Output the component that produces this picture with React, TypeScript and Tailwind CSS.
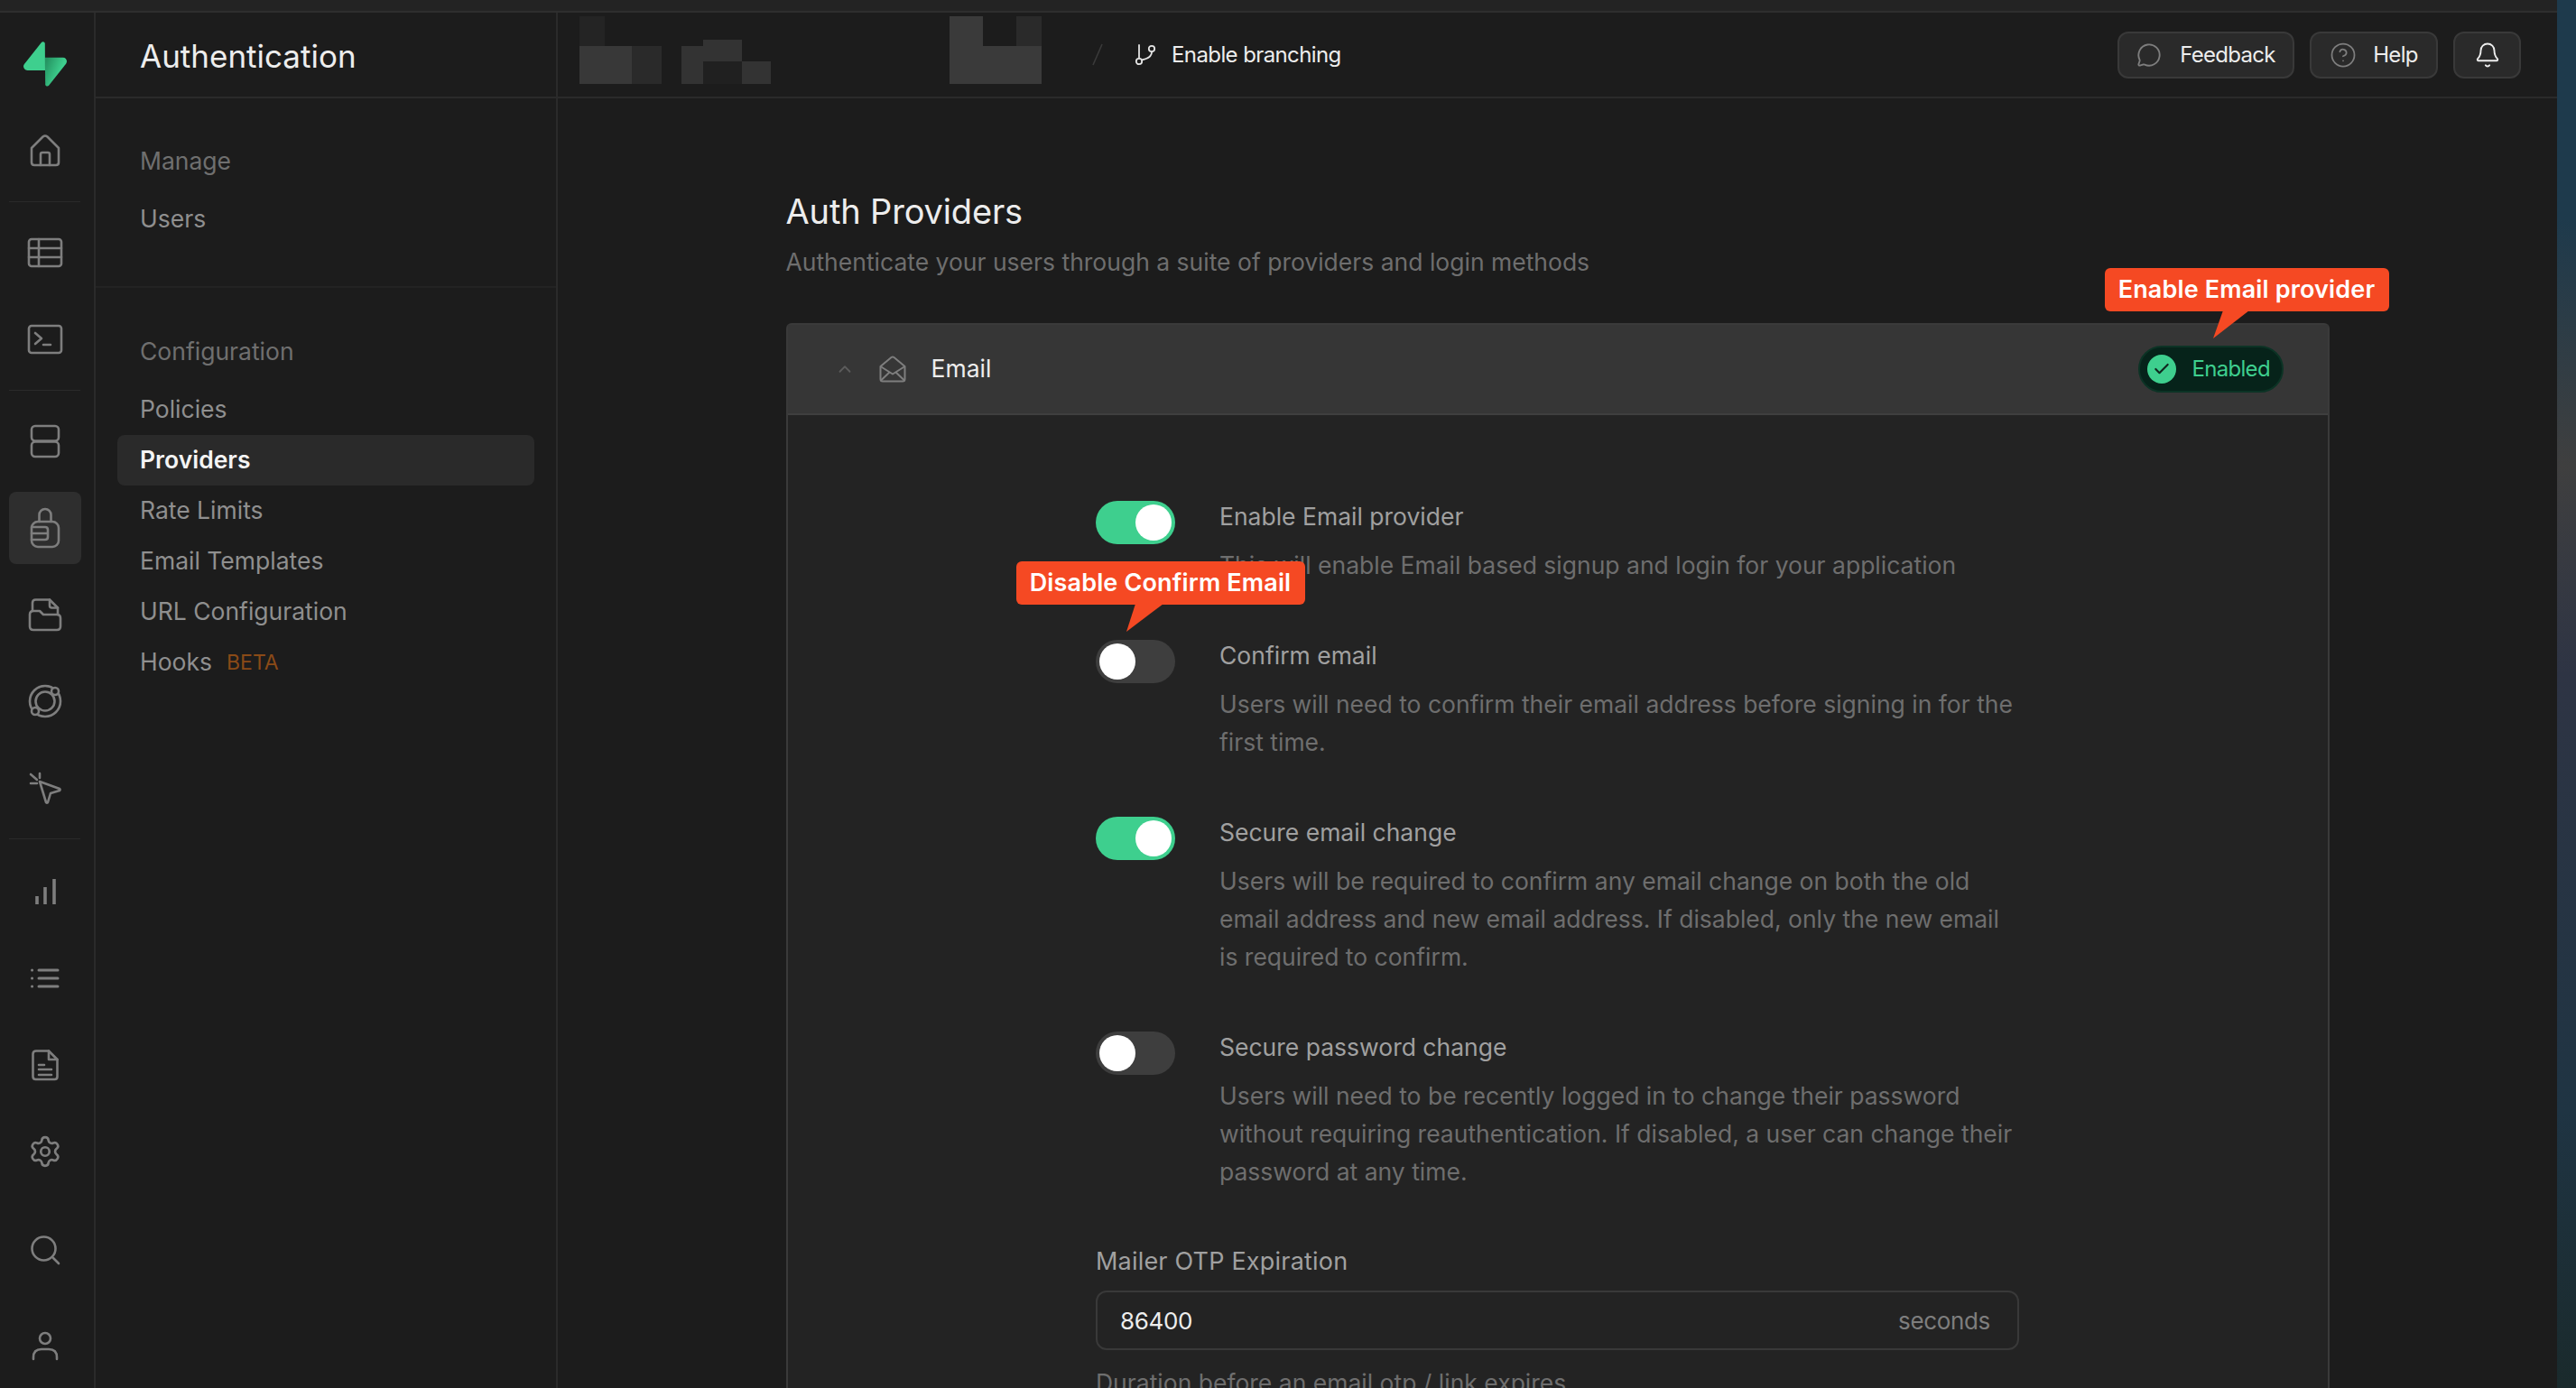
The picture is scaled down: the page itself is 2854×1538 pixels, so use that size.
import { Bell, CircleHelp, ChevronUp, MessageCircle, Settings, Check } from "lucide-react";
import type { ReactNode } from "react";

const railStroke = {
  fill: "none",
  stroke: "#7e7e7e",
  strokeWidth: 2.6,
  strokeLinecap: "round" as const,
  strokeLinejoin: "round" as const,
};

function RailIcon({ children }: { children: ReactNode }) {
  return (
    <svg width="48" height="48" viewBox="0 0 48 48" {...railStroke}>
      {children}
    </svg>
  );
}

function RailCell({ children, active }: { children: ReactNode; active?: boolean }) {
  return (
    <div className="flex h-[96px] items-center justify-center">
      <div className={`flex h-[80px] w-[80px] items-center justify-center rounded-lg ${active ? "bg-[#2e2e2e]" : ""}`}>
        {children}
      </div>
    </div>
  );
}

function RailDivider() {
  return <div className="mx-[10px] my-[8px] h-px bg-[#2a2a2a]" />;
}

function Logo() {
  return (
    <svg width="48" height="50" viewBox="0 0 109 113" fill="none">
      <path
        d="M63.7076 110.284C60.8481 113.885 55.0502 111.912 54.9813 107.314L53.9738 40.0627L99.1935 40.0627C107.384 40.0627 111.952 49.5228 106.859 55.9374L63.7076 110.284Z"
        fill="url(#logoA)"
      />
      <path
        d="M45.317 2.07103C48.1765 -1.53037 53.9745 0.442937 54.0434 5.041L54.4849 72.2922H9.83113C1.64038 72.2922 -2.92775 62.8321 2.1655 56.4175L45.317 2.07103Z"
        fill="#3ECF8E"
      />
      <defs>
        <linearGradient id="logoA" x1="53.97" y1="54.97" x2="94.16" y2="71.83" gradientUnits="userSpaceOnUse">
          <stop stopColor="#249361" />
          <stop offset="1" stopColor="#3ECF8E" />
        </linearGradient>
      </defs>
    </svg>
  );
}

function Rail() {
  return (
    <div className="flex w-[106px] shrink-0 flex-col border-r-2 border-[#2a2a2a] pr-[5px]">
      <div className="flex h-[105px] items-center justify-center pt-[8px]">
        <Logo />
      </div>
      <RailCell>
        <RailIcon>
          <path d="M9 21 L21.5 8.5 Q24 6.5 26.5 8.5 L39 21 V37 Q39 40 36 40 H12 Q9 40 9 37 Z" />
          <path d="M19 40 V28 Q19 26 21 26 H27 Q29 26 29 28 V40" />
        </RailIcon>
      </RailCell>
      <RailDivider />
      <RailCell>
        <RailIcon>
          <rect x="6" y="9" width="36" height="30" rx="3" />
          <path d="M6 19 H42 M6 29 H42 M17 9 V39" />
        </RailIcon>
      </RailCell>
      <RailCell>
        <RailIcon>
          <rect x="6" y="9" width="36" height="30" rx="3" />
          <path d="M13 17 L20 23 L13 29 M22 30 H30" />
        </RailIcon>
      </RailCell>
      <RailDivider />
      <RailCell>
        <RailIcon>
          <rect x="9" y="7" width="30" height="16.5" rx="4" />
          <rect x="9" y="24.5" width="30" height="16.5" rx="4" />
        </RailIcon>
      </RailCell>
      <RailCell active>
        <RailIcon>
          <rect x="9" y="17" width="30" height="28" rx="7" />
          <path d="M17.5 17 V9.5 A6.5 6.5 0 0 1 30.5 9.5 V17" />
          <path d="M9 23 H24 Q27 23 27 26 V34 Q27 37 24 37 H9 M9 30 H27" />
        </RailIcon>
      </RailCell>
      <RailCell>
        <RailIcon>
          <path d="M10 20 V11 Q10 7.5 13.5 7.5 H29 L38 16.5 V24" />
          <path d="M29 7.5 V14 Q29 16.5 31.5 16.5 H38" />
          <path d="M7 24 Q7 20 11 20 H18 L22 24 H37 Q41 24 41 28 V37 Q41 41 37 41 H11 Q7 41 7 37 Z" />
        </RailIcon>
      </RailCell>
      <RailCell>
        <RailIcon>
          <circle cx="24" cy="24" r="17" />
          <circle cx="24" cy="24" r="10.5" />
          <circle cx="35" cy="13" r="4" fill="#1c1c1c" />
          <circle cx="13" cy="35" r="4" fill="#1c1c1c" />
        </RailIcon>
      </RailCell>
      <RailCell>
        <RailIcon>
          <path d="M18 17 L40 25 Q41 26 40 27 L30 30 L27 40 Q26 41 25 40 Z" />
          <path d="M8 9 L15 15 M8 19 H15 M18 8 V13" />
        </RailIcon>
      </RailCell>
      <div className="mx-[10px] mt-[8px] mb-[10px] h-px bg-[#2a2a2a]" />
      <RailCell>
        <RailIcon>
          <path strokeWidth="3.6" strokeLinecap="butt" d="M15 38 V29 M24 38 V19 M34 38 V10" />
        </RailIcon>
      </RailCell>
      <RailCell>
        <RailIcon>
          <path strokeWidth="3" d="M17 15 H38 M17 24 H38 M17 33 H38 M9.5 15 H9.6 M9.5 24 H9.6 M9.5 33 H9.6" />
        </RailIcon>
      </RailCell>
      <RailCell>
        <RailIcon>
          <path d="M10.5 12 Q10.5 8.5 14 8.5 H28 L37.5 18 V37 Q37.5 40 34.5 40 H13.5 Q10.5 40 10.5 37 Z" />
          <path d="M28 8.5 V18 H37.5 M17 24 H23 M17 29 H31 M17 35 H31" />
        </RailIcon>
      </RailCell>
      <RailCell>
        <Settings size={38} color="#7e7e7e" strokeWidth={1.7} />
      </RailCell>
      <div className="mt-auto mb-[-2px] flex flex-col gap-[11px]">
        <RailCell>
          <RailIcon>
            <circle cx="22.5" cy="22.5" r="13" />
            <path d="M33 33 L39 39" />
          </RailIcon>
        </RailCell>
        <RailCell>
          <RailIcon>
            <circle cx="24" cy="15" r="6" />
            <path d="M11 38 V36 Q11 27 20 27 H28 Q37 27 37 36 V38" />
          </RailIcon>
        </RailCell>
      </div>
    </div>
  );
}

function NavRow({ label, active, children }: { label: string; active?: boolean; children?: ReactNode }) {
  return (
    <div
      className={`mx-[24px] flex h-[56px] items-center gap-[16px] rounded-lg px-[25px] text-[26.5px] ${
        active ? "bg-[#2a2a2a] font-semibold text-[#f4f4f4]" : "text-[#8f8f8f]"
      }`}
    >
      {label}
      {children}
    </div>
  );
}

function Sidebar() {
  return (
    <div className="flex w-[512px] shrink-0 flex-col border-r-2 border-[#2a2a2a]">
      <div className="flex h-[95px] shrink-0 items-center border-b-2 border-[#2a2a2a] pt-[3px] pl-[49px] text-[35px] text-[#ededed]">
        Authentication
      </div>
      <div className="border-b-2 border-[#232323] pt-[42px] pb-[46px]">
        <div className="flex h-[56px] items-center pl-[49px] text-[26.5px] text-[#6f6f6f]">Manage</div>
        <div className="mt-[8px]">
          <NavRow label="Users" />
        </div>
      </div>
      <div className="pt-[43px]">
        <div className="flex h-[56px] items-center pl-[49px] text-[26.5px] text-[#6f6f6f]">Configuration</div>
        <div className="mt-[8px]">
          <NavRow label="Policies" />
          <NavRow label="Providers" active />
          <NavRow label="Rate Limits" />
          <NavRow label="Email Templates" />
          <NavRow label="URL Configuration" />
          <NavRow label="Hooks">
            <span className="text-[23px] text-[#8a4a17]">BETA</span>
          </NavRow>
        </div>
      </div>
    </div>
  );
}

function ToolButton({ children, className }: { children: ReactNode; className: string }) {
  return (
    <div
      className={`flex h-[52px] items-center justify-center rounded-xl border-2 border-[#393939] bg-[#2a2a2a] text-[24px] tracking-[-0.7px] text-[#ededed] ${className}`}
    >
      {children}
    </div>
  );
}

function TopBar() {
  return (
    <div className="flex h-[95px] shrink-0 items-center border-b-2 border-[#2a2a2a] pr-[40px] pl-[24px]">
      {/* blurred out project name */}
      <svg width="512" height="75" viewBox="0 0 512 75" className="mt-[-10px] shrink-0">
        <rect x="0" y="0" width="28" height="33" fill="#242424" />
        <rect x="0" y="33" width="58" height="42" fill="#383838" />
        <rect x="58" y="33" width="33" height="42" fill="#2a2a2a" />
        <rect x="113" y="33" width="24" height="42" fill="#333333" />
        <rect x="137" y="26" width="43" height="24" fill="#333333" />
        <rect x="137" y="50" width="43" height="25" fill="#202020" />
        <rect x="180" y="50" width="32" height="25" fill="#333333" />
        <rect x="410" y="0" width="37" height="33" fill="#3a3a3a" />
        <rect x="484" y="0" width="28" height="33" fill="#2a2a2a" />
        <rect x="410" y="33" width="102" height="42" fill="#3a3a3a" />
      </svg>
      <svg width="12" height="25" viewBox="0 0 12 25" className="ml-[56px]">
        <path d="M11 1 L1 24" stroke="#3a3a3a" strokeWidth="1.6" />
      </svg>
      <svg
        width="26"
        height="24"
        viewBox="0 0 26 24"
        fill="none"
        stroke="#e4e4e4"
        strokeWidth="1.8"
        strokeLinecap="round"
        className="ml-[34px]"
      >
        <path d="M6 1 V15 M20 9 Q20 15 9 17.5" />
        <circle cx="6" cy="19" r="3.2" />
        <circle cx="20" cy="5" r="3.2" />
      </svg>
      <span className="ml-[16px] text-[24px] tracking-[-0.6px] text-[#ededed]">Enable branching</span>
      <div className="ml-auto flex gap-[17px]">
        <ToolButton className="w-[196px] gap-[20px]">
          <MessageCircle size={28} color="#7e7e7e" strokeWidth={1.6} />
          Feedback
        </ToolButton>
        <ToolButton className="w-[142px] gap-[18px]">
          <CircleHelp size={30} color="#7e7e7e" strokeWidth={1.4} />
          Help
        </ToolButton>
        <ToolButton className="w-[75px]">
          <Bell size={30} color="#ededed" strokeWidth={1.5} />
        </ToolButton>
      </div>
    </div>
  );
}

function Toggle({ on }: { on?: boolean }) {
  return (
    <div
      className={`mt-px flex h-[48px] w-[88px] shrink-0 items-center rounded-full p-[4px] ${
        on ? "justify-end bg-[#3ecf8e]" : "justify-start bg-[#3e3e3e]"
      }`}
    >
      <div className="h-[40px] w-[40px] rounded-full bg-white" />
    </div>
  );
}

function SettingRow({ on, label, lines }: { on?: boolean; label: string; lines: string[] }) {
  return (
    <div className="flex gap-[49px]">
      <Toggle on={on} />
      <div>
        <div className="text-[26.5px] leading-[36px] text-[#a0a0a0]">{label}</div>
        <div className="mt-[15px] text-[26.5px] leading-[42px] whitespace-nowrap text-[#6e6e6e]">
          {lines.map((line) => (
            <div key={line}>{line}</div>
          ))}
        </div>
      </div>
    </div>
  );
}

function Callout({ text, className, tip }: { text: string; className: string; tip: ReactNode }) {
  return (
    <div
      className={`absolute z-10 flex h-[48px] items-center justify-center rounded-md bg-[#f54923] text-[27px] font-semibold tracking-[0.15px] whitespace-nowrap text-white ${className}`}
    >
      {text}
      {tip}
    </div>
  );
}

function Card() {
  return (
    <div className="relative rounded-t-md border-x-2 border-t-2 border-[#3a3a3a]">
      <Callout
        text="Enable Email provider"
        className="top-[-63px] left-[1459px] w-[315px]"
        tip={
          <svg width="50" height="32" viewBox="0 0 50 32" className="absolute top-[47px] left-[118px]">
            <polygon points="13,0 42,0 2,31" fill="#f54923" />
          </svg>
        }
      />
      <Callout
        text="Disable Confirm Email"
        className="top-[262px] left-[253px] w-[320px]"
        tip={
          <svg width="44" height="32" viewBox="0 0 44 32" className="absolute top-[47px] left-[120px]">
            <polygon points="12,0 43,0 2,31" fill="#f54923" />
          </svg>
        }
      />
      <div className="flex h-[100px] items-center border-b-2 border-[#3f3f3f] bg-[#363636] pr-[49px] pl-[52px]">
        <ChevronUp size={22} color="#5c5c5c" strokeWidth={2} />
        <svg
          width="30"
          height="30"
          viewBox="0 0 30 30"
          fill="none"
          stroke="#7e7e7e"
          strokeWidth="2"
          strokeLinejoin="round"
          className="ml-[27px]"
        >
          <path d="M1.5 12 L13.5 2 Q15 1 16.5 2 L28.5 12 V26 Q28.5 28.5 26 28.5 H4 Q1.5 28.5 1.5 26 Z" />
          <path d="M1.5 12 L15 20.5 L28.5 12 M2 27.5 L11.5 18.5 M28 27.5 L18.5 18.5" />
        </svg>
        <span className="ml-[28px] text-[26.5px] text-[#ededed]">Email</span>
        <div className="ml-auto flex h-[52px] w-[161px] items-center gap-[18px] rounded-full border-2 border-[#0c3325] bg-[#06231a] pl-[8px]">
          <div className="flex h-[32px] w-[32px] items-center justify-center rounded-full bg-[#3ecf8e]">
            <Check size={20} color="#10281f" strokeWidth={2.6} />
          </div>
          <span className="text-[24px] tracking-[-0.7px] text-[#3ecf8e]">Enabled</span>
        </div>
      </div>
      <div className="flex flex-col bg-[#232323] pt-[94px]">
        <div className="mx-auto flex w-[1023px] flex-col gap-[61px]">
          <SettingRow on label="Enable Email provider" lines={["This will enable Email based signup and login for your application"]} />
          <SettingRow
            label="Confirm email"
            lines={["Users will need to confirm their email address before signing in for the", "first time."]}
          />
          <SettingRow
            on
            label="Secure email change"
            lines={[
              "Users will be required to confirm any email change on both the old",
              "email address and new email address. If disabled, only the new email",
              "is required to confirm.",
            ]}
          />
          <SettingRow
            label="Secure password change"
            lines={[
              "Users will need to be recently logged in to change their password",
              "without requiring reauthentication. If disabled, a user can change their",
              "password at any time.",
            ]}
          />
          <div>
            <div className="text-[27px] leading-[36px] tracking-[0.2px] text-[#a0a0a0]">Mailer OTP Expiration</div>
            <div className="mt-[14px] flex h-[66px] items-center rounded-xl border-2 border-[#393939] pr-[30px] pl-[25px] text-[26px] tracking-[-0.35px]">
              <span className="text-[#ededed]">86400</span>
              <span className="ml-auto text-[#7e7e7e]">seconds</span>
            </div>
            <div className="mt-[15px] text-[26.5px] leading-[42px] text-[#6e6e6e]">
              Duration before an email otp / link expires
            </div>
          </div>
        </div>
      </div>
    </div>
  );
}

export default function App() {
  return (
    <div className="flex h-screen w-screen flex-col overflow-hidden bg-[#1c1c1c] font-['Inter',sans-serif]">
      <div className="flex h-[14px] shrink-0">
        <div className="h-[14px] flex-1 border-b-2 border-[#2e2e2e] bg-[#232323]" />
        <div className="w-[21px] bg-[#1e3a4c]" />
      </div>
      <div className="flex min-h-0 flex-1">
        <Rail />
        <Sidebar />
        <div className="flex min-w-0 flex-1 flex-col overflow-hidden">
          <TopBar />
          <div className="mx-auto w-[1710px] shrink-0 pt-[101px]">
            <div className="text-[38px] leading-[48px] tracking-[-0.15px] text-[#ededed]">Auth Providers</div>
            <div className="mt-[12px] text-[26.5px] leading-[40px] text-[#6e6e6e]">
              Authenticate your users through a suite of providers and login methods
            </div>
            <div className="mt-[48px]">
              <Card />
            </div>
          </div>
        </div>
        <div className="w-[21px] shrink-0 bg-[linear-gradient(180deg,#1e3a4c_0%,#1e3a4c_15%,#3f3f3f_33%,#2e3444_48%,#1f3443_80%,#1a2a2c_100%)]" />
      </div>
    </div>
  );
}
